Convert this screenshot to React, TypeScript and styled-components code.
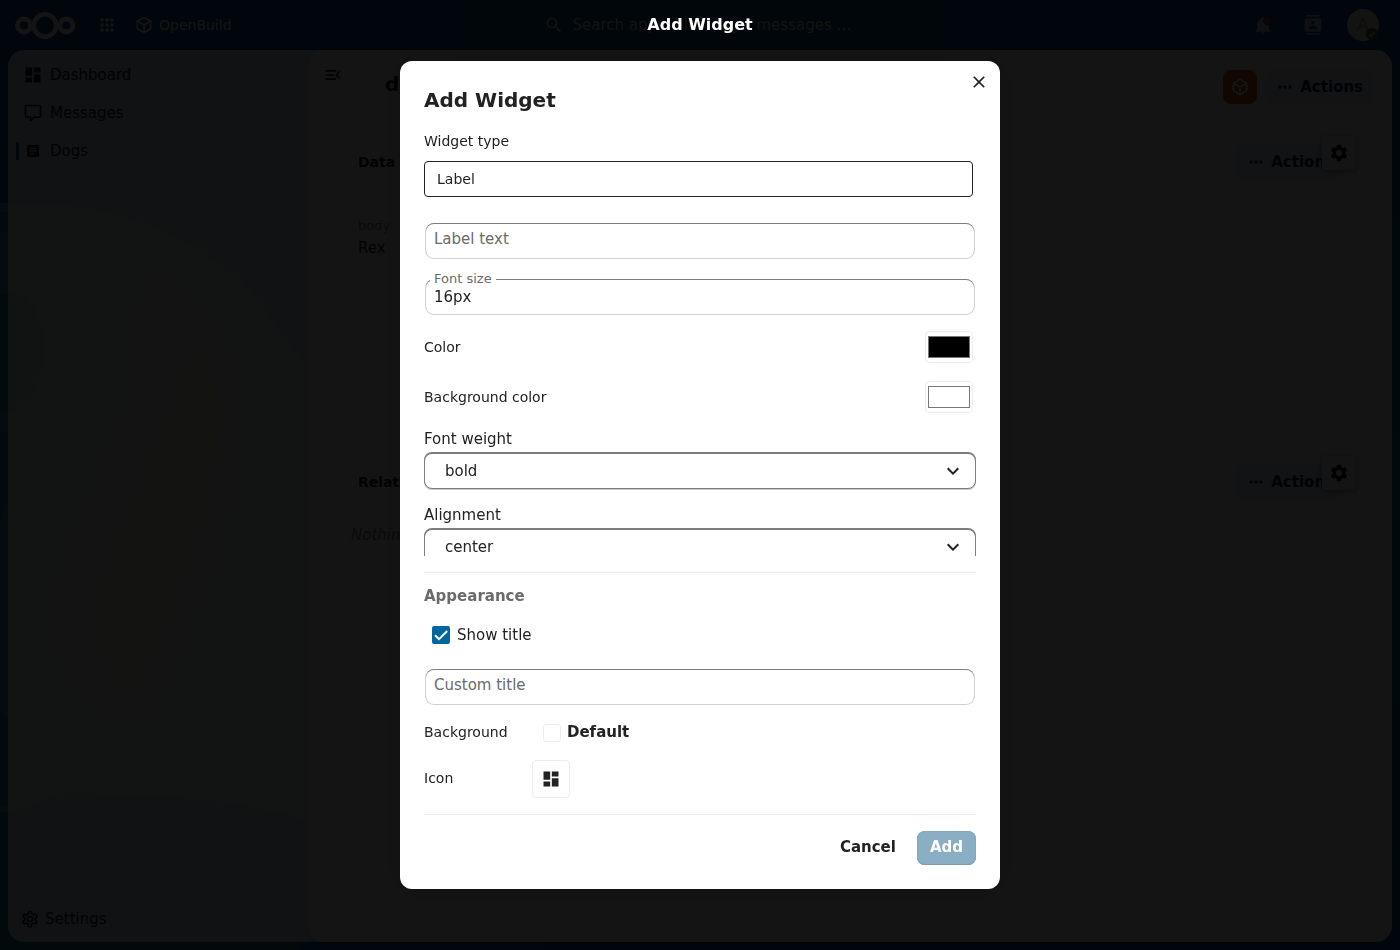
import React, { useState } from "react";
import styled, { createGlobalStyle } from "styled-components";

const GlobalStyle = createGlobalStyle`
  *, *::before, *::after { box-sizing: border-box; }
  html { background: #00589e; }
  body {
    margin: 0;
    font-family: "DejaVu Sans", "Noto Sans", sans-serif;
    font-size: 15px;
    line-height: 20px;
    color: #222;
  }
  button, input, select { font: inherit; color: inherit; margin: 0; }
  h1, h2, h3, p, ul, dl, dd { margin: 0; padding: 0; }
`;

const paths = {
  dashboard: "M13,3V9H21V3M13,21H21V11H13M3,21H11V15H3M3,13H11V3H3V13Z",
  comment:
    "M9,22A1,1 0 0,1 8,21V18H4A2,2 0 0,1 2,16V4C2,2.89 2.9,2 4,2H20A2,2 0 0,1 22,4V16A2,2 0 0,1 20,18H13.9L10.2,21.71C10,21.9 9.75,22 9.5,22V22H9M10,16V19.08L13.08,16H20V4H4V16H10Z",
  textBox:
    "M14,17H7V15H14M17,13H7V11H17M17,9H7V7H17M19,3H5C3.89,3 3,3.89 3,5V19A2,2 0 0,0 5,21H19A2,2 0 0,0 21,19V5C21,3.89 20.1,3 19,3Z",
  menuOpen:
    "M21,15.61L19.59,17L14.58,12L19.59,7L21,8.39L17.44,12L21,15.61M3,6H16V8H3V6M3,13V11H13V13H3M3,18V16H16V18H3Z",
  cube:
    "M21,16.5C21,16.88 20.79,17.21 20.47,17.38L12.57,21.82C12.41,21.94 12.21,22 12,22C11.79,22 11.59,21.94 11.43,21.82L3.53,17.38C3.21,17.21 3,16.88 3,16.5V7.5C3,7.12 3.21,6.79 3.53,6.62L11.43,2.18C11.59,2.06 11.79,2 12,2C12.21,2 12.41,2.06 12.57,2.18L20.47,6.62C20.79,6.79 21,7.12 21,7.5V16.5M12,4.15L6.04,7.5L12,10.85L17.96,7.5L12,4.15M5,15.91L11,19.29V12.58L5,9.21V15.91M19,15.91V9.21L13,12.58V19.29L19,15.91Z",
  search:
    "M9.5,3A6.5,6.5 0 0,1 16,9.5C16,11.11 15.41,12.59 14.44,13.73L14.71,14H15.5L20.5,19L19,20.5L14,15.5V14.71L13.73,14.44C12.59,15.41 11.11,16 9.5,16A6.5,6.5 0 0,1 3,9.5A6.5,6.5 0 0,1 9.5,3M9.5,5C7,5 5,7 5,9.5C5,12 7,14 9.5,14C12,14 14,12 14,9.5C14,7 12,5 9.5,5Z",
  bell:
    "M21,19V20H3V19L5,17V11C5,7.9 7.03,5.17 10,4.29C10,4.19 10,4.1 10,4A2,2 0 0,1 12,2A2,2 0 0,1 14,4C14,4.1 14,4.19 14,4.29C16.97,5.17 19,7.9 19,11V17L21,19M14,21A2,2 0 0,1 12,23A2,2 0 0,1 10,21",
  contacts:
    "M20,0H4V2H20V0M4,24H20V22H4V24M20,4H4A2,2 0 0,0 2,6V18A2,2 0 0,0 4,20H20A2,2 0 0,0 22,18V6A2,2 0 0,0 20,4M12,6.75A2.25,2.25 0 0,1 14.25,9A2.25,2.25 0 0,1 12,11.25A2.25,2.25 0 0,1 9.75,9A2.25,2.25 0 0,1 12,6.75M17,17H7V15.5C7,13.83 10.33,13 12,13C13.67,13 17,13.83 17,15.5V17Z",
  dots:
    "M16,12A2,2 0 0,1 18,10A2,2 0 0,1 20,12A2,2 0 0,1 18,14A2,2 0 0,1 16,12M10,12A2,2 0 0,1 12,10A2,2 0 0,1 14,12A2,2 0 0,1 12,14A2,2 0 0,1 10,12M4,12A2,2 0 0,1 6,10A2,2 0 0,1 8,12A2,2 0 0,1 6,14A2,2 0 0,1 4,12Z",
  cog:
    "M12,15.5A3.5,3.5 0 0,1 8.5,12A3.5,3.5 0 0,1 12,8.5A3.5,3.5 0 0,1 15.5,12A3.5,3.5 0 0,1 12,15.5M19.43,12.97C19.47,12.65 19.5,12.33 19.5,12C19.5,11.67 19.47,11.34 19.43,11L21.54,9.37C21.73,9.22 21.78,8.95 21.66,8.73L19.66,5.27C19.54,5.05 19.27,4.96 19.05,5.05L16.56,6.05C16.04,5.66 15.5,5.32 14.87,5.07L14.5,2.42C14.46,2.18 14.25,2 14,2H10C9.75,2 9.54,2.18 9.5,2.42L9.13,5.07C8.5,5.32 7.96,5.66 7.44,6.05L4.95,5.05C4.73,4.96 4.46,5.05 4.34,5.27L2.34,8.73C2.21,8.95 2.27,9.22 2.46,9.37L4.57,11C4.53,11.34 4.5,11.67 4.5,12C4.5,12.33 4.53,12.65 4.57,12.97L2.46,14.63C2.27,14.78 2.21,15.05 2.34,15.27L4.34,18.73C4.46,18.95 4.73,19.03 4.95,18.95L7.44,17.94C7.96,18.34 8.5,18.68 9.13,18.93L9.5,21.58C9.54,21.82 9.75,22 10,22H14C14.25,22 14.46,21.82 14.5,21.58L14.87,18.93C15.5,18.67 16.04,18.34 16.56,17.94L19.05,18.95C19.27,19.03 19.54,18.95 19.66,18.73L21.66,15.27C21.78,15.05 21.73,14.78 21.54,14.63L19.43,12.97Z",
  cogOutline:
    "M12,8A4,4 0 0,1 16,12A4,4 0 0,1 12,16A4,4 0 0,1 8,12A4,4 0 0,1 12,8M12,10A2,2 0 0,0 10,12A2,2 0 0,0 12,14A2,2 0 0,0 14,12A2,2 0 0,0 12,10M10,22C9.75,22 9.54,21.82 9.5,21.58L9.13,18.93C8.5,18.68 7.96,18.34 7.44,17.94L4.95,18.95C4.73,19.03 4.46,18.95 4.34,18.73L2.34,15.27C2.21,15.05 2.27,14.78 2.46,14.63L4.57,12.97L4.5,12L4.57,11L2.46,9.37C2.27,9.22 2.21,8.95 2.34,8.73L4.34,5.27C4.46,5.05 4.73,4.96 4.95,5.05L7.44,6.05C7.96,5.66 8.5,5.32 9.13,5.07L9.5,2.42C9.54,2.18 9.75,2 10,2H14C14.25,2 14.46,2.18 14.5,2.42L14.87,5.07C15.5,5.32 16.04,5.66 16.56,6.05L19.05,5.05C19.27,4.96 19.54,5.05 19.66,5.27L21.66,8.73C21.79,8.95 21.73,9.22 21.54,9.37L19.43,11L19.5,12L19.43,13L21.54,14.63C21.73,14.78 21.79,15.05 21.66,15.27L19.66,18.73C19.54,18.95 19.27,19.04 19.05,18.95L16.56,17.95C16.04,18.34 15.5,18.68 14.87,18.93L14.5,21.58C14.46,21.82 14.25,22 14,22H10M11.25,4L10.88,6.61C9.68,6.86 8.62,7.5 7.85,8.39L5.44,7.35L4.69,8.65L6.8,10.2C6.4,11.37 6.4,12.64 6.8,13.8L4.68,15.36L5.43,16.66L7.86,15.62C8.63,16.5 9.68,17.14 10.87,17.38L11.24,20H12.76L13.13,17.39C14.32,17.14 15.37,16.5 16.14,15.62L18.57,16.66L19.32,15.36L17.2,13.81C17.6,12.64 17.6,11.37 17.2,10.2L19.31,8.65L18.56,7.35L16.15,8.39C15.38,7.5 14.32,6.86 13.12,6.62L12.75,4H11.25Z",
  close:
    "M19,6.41L17.59,5L12,10.59L6.41,5L5,6.41L10.59,12L5,17.59L6.41,19L12,13.41L17.59,19L19,17.59L13.41,12L19,6.41Z",
  chevron: "M7.41,8.58L12,13.17L16.59,8.58L18,10L12,16L6,10L7.41,8.58Z",
};

const Svg = styled.svg`
  display: block;
  flex: none;
  fill: currentColor;
`;

function Icon({ name, size = 20 }: { name: keyof typeof paths; size?: number }) {
  return (
    <Svg width={size} height={size} viewBox="0 0 24 24" aria-hidden="true">
      <path d={paths[name]} />
    </Svg>
  );
}

/* ---------- Page behind the dialog ---------- */

const Page = styled.div`
  position: relative;
  display: flex;
  flex-direction: column;
  min-height: 100vh;
  isolation: isolate;
`;

const WallpaperSvg = styled.svg`
  position: absolute;
  inset: 0;
  width: 100%;
  height: 100%;
  z-index: -1;
`;

const TopBar = styled.header`
  display: flex;
  align-items: center;
  height: 50px;
  padding: 0 16px 0 12px;
  color: #fff;
`;

const TopSide = styled.div<{ $end?: boolean }>`
  display: flex;
  flex: 1 1 0;
  align-items: center;
  justify-content: ${(p) => (p.$end ? "flex-end" : "flex-start")};
`;

const AppsButton = styled.button`
  display: flex;
  margin-left: 19px;
  padding: 0;
  border: 0;
  background: none;
`;

const AppLink = styled.a`
  display: flex;
  align-items: center;
  gap: 5px;
  margin-left: 17px;
  font-size: 14px;
  color: inherit;
  text-decoration: none;
`;

const SearchButton = styled.button`
  display: flex;
  align-items: center;
  justify-content: center;
  gap: 8px;
  flex: 0 1 488px;
  height: 34px;
  border: 0;
  border-radius: 8px;
  background: #004a72;
  white-space: nowrap;
  color: #dde6ea;
`;

const TopIconButton = styled.button`
  position: relative;
  display: grid;
  place-items: center;
  width: 50px;
  height: 50px;
  padding: 0;
  border: 0;
  background: none;
  opacity: 0.7;
`;

const UnreadDot = styled.span`
  position: absolute;
  top: 17px;
  right: 17px;
  width: 7px;
  height: 7px;
  border-radius: 50%;
  background: #e9560d;
  box-shadow: 0 0 0 1px #00447a;
`;

const Avatar = styled.button`
  position: relative;
  width: 32px;
  height: 32px;
  margin: 0 5px 0 9px;
  padding: 0;
  border: 0;
  border-radius: 50%;
  background: #f3efd7;
  color: #b89a88;
  font-size: 18px;
`;

const Status = styled.span`
  position: absolute;
  right: 1px;
  bottom: 1px;
  display: grid;
  place-items: center;
  width: 12px;
  height: 12px;
  border-radius: 50%;
  background: #2d7b41;
  color: #fff;
`;

const Shell = styled.div`
  display: flex;
  flex: 1;
  margin: 0 8px 8px;
  border-radius: 16px;
  overflow: hidden;
  background: rgba(255, 255, 255, 0.8);
`;

const Sidebar = styled.nav`
  display: flex;
  flex: 0 0 300px;
  flex-direction: column;
  justify-content: space-between;
  padding: 8px 8px 6px;
`;

const NavList = styled.ul`
  display: grid;
  gap: 4px;
  list-style: none;
`;

const NavLink = styled.a<{ $active?: boolean }>`
  position: relative;
  display: flex;
  align-items: center;
  height: 34px;
  border-radius: 8px;
  background: ${(p) => (p.$active ? "rgba(255, 255, 255, 0.25)" : "none")};
  color: inherit;
  text-decoration: none;

  &::before {
    content: "";
    position: absolute;
    left: 0;
    width: 3px;
    height: 18px;
    border-radius: 2px;
    background: ${(p) => (p.$active ? "#00679e" : "transparent")};
  }
`;

const NavIcon = styled.span`
  display: grid;
  place-items: center;
  width: 34px;
`;

const SettingsButton = styled.button`
  display: flex;
  align-items: center;
  gap: 5px;
  height: 34px;
  padding: 0 4px;
  border: 0;
  background: none;
`;

const Main = styled.main`
  flex: 1;
  min-width: 0;
  border-radius: 16px;
  background: #fff;
`;

const MainHead = styled.div`
  display: flex;
  align-items: flex-start;
  gap: 8px;
  height: 84px;
  padding: 20px 19px 0 16px;
`;

const Toggle = styled.button`
  display: flex;
  margin: -5px 34px 0 -1px;
  padding: 0;
  border: 0;
  background: none;
`;

const MainTitle = styled.h1`
  flex: 1;
  font-size: 20px;
  line-height: 28px;
`;

const OrangeButton = styled.button`
  display: grid;
  place-items: center;
  width: 34px;
  height: 34px;
  padding: 0;
  border: 0;
  border-radius: 8px;
  background: #d8590a;
  color: #fff;
`;

const ActionsButton = styled.button`
  display: flex;
  align-items: center;
  gap: 5px;
  height: 34px;
  padding: 0 10px;
  border: 0;
  border-radius: 8px;
  background: #e0e9f5;
  color: #00293f;
  font-weight: bold;
`;

const Card = styled.section`
  margin: 0 35px 26px;
  border: 1px solid #f1f1f1;
  height: 294px;
`;

const CardHead = styled.div`
  position: relative;
  display: flex;
  align-items: center;
  justify-content: space-between;
  height: 57px;
  padding: 0 12px 2px 14px;
  border-bottom: 1px solid #f1f1f1;
`;

const CardTitle = styled.h2`
  font-size: 14px;
`;

const GearButton = styled.button`
  position: absolute;
  top: 1px;
  right: 0;
  display: grid;
  place-items: center;
  width: 34px;
  height: 34px;
  padding: 0;
  border: 0;
  border-radius: 4px;
  background: #fff;
  box-shadow: 0 1px 5px rgba(0, 0, 0, 0.4);
`;

const Fields = styled.dl`
  margin: 24px 14px 0;
  padding-bottom: 55px;
  border-bottom: 1px solid #e6e6e6;

  dt {
    font-size: 13px;
    color: #888;
  }
  dd {
    margin-top: 2px;
  }
`;

const Empty = styled.p`
  padding: 13px 7px;
  font-style: italic;
  color: #777;
`;

/* ---------- Dialog ---------- */

const Mask = styled.div`
  position: fixed;
  inset: 0;
  display: grid;
  place-items: center;
  background: rgba(0, 0, 0, 0.92);
`;

const MaskTitle = styled.div`
  position: absolute;
  top: 0;
  width: 100%;
  line-height: 50px;
  text-align: center;
  font-size: 16px;
  font-weight: bold;
  color: #fff;
`;

const Dialog = styled.div`
  position: relative;
  display: flex;
  flex-direction: column;
  width: min(600px, calc(100vw - 32px));
  max-height: calc(100vh - 122px);
  padding: 24px;
  border-radius: 12px;
  background: #fff;
  box-shadow: 0 0 40px rgba(0, 0, 0, 0.2);
`;

const DialogTitle = styled.h2`
  flex: none;
  margin-bottom: 16px;
  font-size: 20px;
  line-height: 30px;
`;

const CloseButton = styled.button`
  position: absolute;
  top: 4px;
  right: 4px;
  display: grid;
  place-items: center;
  width: 34px;
  height: 34px;
  padding: 0;
  border: 0;
  background: none;
`;

const FormScroll = styled.div`
  flex: 0 1 auto;
  min-height: 0;
  overflow-y: auto;
  scrollbar-width: none;
`;

const SmallLabel = styled.label`
  display: block;
  font-size: 14px;
`;

const TypeSelect = styled.select`
  display: block;
  appearance: none;
  width: calc(100% - 3px);
  height: 36px;
  margin: 10px 0 26px;
  padding: 0 12px;
  border: 1px solid #222;
  border-radius: 4px;
  background: #fff;
  font-size: 14px;
`;

const FieldWrap = styled.div`
  position: relative;
  padding: 2px;
`;

const TextInput = styled.input`
  display: block;
  width: 100%;
  height: 34px;
  margin: -1px 0;
  padding: 0 8px;
  border: 0;
  border-radius: 8px;
  outline: none;
  background: #fff;
  box-shadow: 0 -1px #7d7d7d, 0 0 0 1px #d0d0d0;
`;

const FieldLabel = styled.label<{ $raised?: boolean }>`
  position: absolute;
  left: 6px;
  top: ${(p) => (p.$raised ? "-8px" : "6px")};
  padding: 0 4px;
  background: #fff;
  font-size: ${(p) => (p.$raised ? "13px" : "15px")};
  line-height: ${(p) => (p.$raised ? "16px" : "20px")};
  color: #6b6b6b;
`;

const InputStack = styled.div`
  display: grid;
  gap: 20px;
  margin-bottom: 16px;
`;

const ColorRow = styled.div`
  display: flex;
  align-items: center;
  justify-content: space-between;
  height: 32px;
  margin-bottom: 18px;
  padding-right: 3px;
`;

const ColorInput = styled.input`
  width: 48px;
  height: 32px;
  padding: 0;
  border: 1px solid #ededed;
  border-radius: 4px;
  background: #fff;
`;

const SelectGroup = styled.div`
  display: grid;
  gap: 4px;
  margin: -2px 0 18px;
`;

const SelectWrap = styled.div`
  position: relative;

  svg {
    position: absolute;
    top: 6px;
    right: 11px;
    pointer-events: none;
  }
`;

const Select = styled.select`
  display: block;
  appearance: none;
  width: 100%;
  height: 36px;
  padding: 0 20px;
  border: 1px solid #7d7d7d;
  border-radius: 8px;
  background: #fff;
  box-shadow: 0 -1px #7d7d7d, 0 1px #c8c8c8;
`;

const Appearance = styled.section`
  flex: none;
  margin-top: 16px;
  padding: 12px 0 16px;
  border-top: 1px solid #ededed;
  border-bottom: 1px solid #ededed;
`;

const SectionTitle = styled.h3`
  margin-bottom: 10px;
  font-size: 15px;
  line-height: 22px;
  color: #6b6b6b;
`;

const CheckRow = styled.label`
  display: flex;
  align-items: center;
  gap: 7px;
  height: 36px;
  margin-bottom: 16px;
  padding-left: 8px;
`;

const CheckBox = styled.span`
  display: grid;
  width: 18px;
  height: 18px;

  input,
  svg {
    grid-area: 1 / 1;
  }
  input {
    appearance: none;
    width: 18px;
    height: 18px;
    border: 2px solid #00679e;
    border-radius: 2px;
  }
  input:checked {
    background: #00679e;
  }
  svg {
    pointer-events: none;
    fill: none;
    stroke: #fff;
    stroke-width: 2;
  }
`;

const OptionRow = styled.div<{ $height: number }>`
  display: flex;
  align-items: center;
  height: ${(p) => p.$height}px;
  margin-top: 16px;
`;

const OptionLabel = styled(SmallLabel)`
  width: 108px;
  padding-bottom: 2px;
`;

const DefaultButton = styled.button`
  display: flex;
  align-items: center;
  gap: 6px;
  padding: 0 11px;
  border: 0;
  background: none;
  font-weight: bold;
  line-height: 18px;
`;

const DefaultText = styled.span`
  padding-bottom: 2px;
`;

const Swatch = styled.span`
  width: 18px;
  height: 18px;
  border: 1px solid #ededed;
  border-radius: 3px;
`;

const IconPicker = styled.button`
  display: grid;
  place-items: center;
  width: 38px;
  height: 38px;
  padding: 0;
  border: 1px solid #ededed;
  border-radius: 4px;
  background: #fff;
`;

const Footer = styled.div`
  display: flex;
  flex: none;
  justify-content: flex-end;
  gap: 8px;
  padding-top: 16px;
`;

const FooterButton = styled.button<{ $primary?: boolean }>`
  height: 34px;
  padding: 0 13px 2px;
  border: 0;
  border-radius: 8px;
  font-weight: bold;
  background: ${(p) => (p.$primary ? "#8aaec4" : "none")};
  color: ${(p) => (p.$primary ? "#fff" : "#222")};
  box-shadow: ${(p) => (p.$primary ? "inset 0 -1px #7c9db1, inset 0 0 0 1px #84a7bc" : "none")};
`;

function Wallpaper() {
  return (
    <WallpaperSvg viewBox="0 0 1400 950" preserveAspectRatio="xMidYMid slice" aria-hidden="true">
      <defs>
        <linearGradient id="sky" x1="0" y1="0" x2="0" y2="1">
          <stop offset="0" stopColor="#00508c" />
          <stop offset="0.5" stopColor="#0070b4" />
          <stop offset="1" stopColor="#005088" />
        </linearGradient>
      </defs>
      <rect width="1400" height="950" fill="url(#sky)" />
      <path d="M0 203C120 198 200 240 250 290C290 340 300 365 330 380V830C230 790 150 800 70 792C40 800 20 815 0 812Z" fill="#5090bc" />
      <path d="M0 293C40 290 42 330 42 350C42 385 30 410 0 412Z" fill="#209098" />
      <path d="M140 270C200 275 250 340 246 420C244 520 200 620 160 710C140 745 70 700 42 640C40 560 110 460 128 380C134 330 130 280 140 270Z" fill="#68b088" />
      <path d="M195 345C225 370 220 440 206 500C190 570 160 650 130 690C100 690 90 620 110 560C130 500 180 380 195 345Z" fill="#b0a080" />
      <path d="M0 812C30 812 50 800 62 793C150 795 250 820 308 866V950H0Z" fill="#289098" opacity="0.6" />
      <path d="M0 212H8V232H0ZM0 432H8V500L0 520ZM0 711L8 718V805H0Z" fill="#307098" />
      <path d="M300 942H540L545 950H300Z" fill="#0068b4" />
    </WallpaperSvg>
  );
}

function Logo() {
  return (
    <Svg width="66" height="30" viewBox="0 0 66 30" role="img" aria-label="Home">
      <g fill="none" stroke="#fff">
        <circle cx="33" cy="15.5" r="11.2" strokeWidth="4.6" />
        <circle cx="12" cy="15.5" r="6.5" strokeWidth="4.8" />
        <circle cx="54.3" cy="15.5" r="6.5" strokeWidth="4.8" />
      </g>
    </Svg>
  );
}

function AppsGrid() {
  return (
    <Svg width="20" height="20" viewBox="0 0 20 20" aria-hidden="true">
      {[5, 10, 15].map((y) => [5, 10, 15].map((x) => <circle key={`${x}-${y}`} cx={x} cy={y} r="1.8" />))}
    </Svg>
  );
}

function Actions() {
  return (
    <ActionsButton type="button">
      <Icon name="dots" />
      Actions
    </ActionsButton>
  );
}

function TextField({ id, label, initial = "" }: { id: string; label: string; initial?: string }) {
  const [value, setValue] = useState(initial);
  return (
    <FieldWrap>
      <TextInput id={id} value={value} onChange={(e) => setValue(e.target.value)} />
      <FieldLabel htmlFor={id} $raised={value !== ""}>
        {label}
      </FieldLabel>
    </FieldWrap>
  );
}

function SelectField({ id, label, options, initial }: { id: string; label: string; options: string[]; initial: string }) {
  return (
    <SelectGroup>
      <label htmlFor={id}>{label}</label>
      <SelectWrap>
        <Select id={id} defaultValue={initial}>
          {options.map((o) => (
            <option key={o}>{o}</option>
          ))}
        </Select>
        <Icon name="chevron" size={24} />
      </SelectWrap>
    </SelectGroup>
  );
}

function AddWidgetDialog() {
  return (
    <Mask>
      <MaskTitle>Add Widget</MaskTitle>
      <Dialog role="dialog" aria-modal="true" aria-labelledby="dialog-title">
        <DialogTitle id="dialog-title">Add Widget</DialogTitle>
        <CloseButton type="button" aria-label="Close">
          <Icon name="close" />
        </CloseButton>
        <FormScroll>
          <SmallLabel htmlFor="widget-type">Widget type</SmallLabel>
          <TypeSelect id="widget-type">
            <option>Label</option>
          </TypeSelect>
          <InputStack>
            <TextField id="label-text" label="Label text" />
            <TextField id="font-size" label="Font size" initial="16px" />
          </InputStack>
          <ColorRow>
            <SmallLabel htmlFor="color">Color</SmallLabel>
            <ColorInput id="color" type="color" defaultValue="#000000" />
          </ColorRow>
          <ColorRow>
            <SmallLabel htmlFor="bg-color">Background color</SmallLabel>
            <ColorInput id="bg-color" type="color" defaultValue="#ffffff" />
          </ColorRow>
          <SelectField id="font-weight" label="Font weight" options={["normal", "bold"]} initial="bold" />
          <SelectField id="alignment" label="Alignment" options={["left", "center", "right"]} initial="center" />
        </FormScroll>
        <Appearance>
          <SectionTitle>Appearance</SectionTitle>
          <CheckRow>
            <CheckBox>
              <input type="checkbox" defaultChecked />
              <Svg width="18" height="18" viewBox="0 0 18 18" aria-hidden="true">
                <path d="M3 9.2L7 13.2L15.2 5" />
              </Svg>
            </CheckBox>
            Show title
          </CheckRow>
          <TextField id="custom-title" label="Custom title" />
          <OptionRow $height={23}>
            <OptionLabel htmlFor="background">Background</OptionLabel>
            <DefaultButton id="background" type="button">
              <Swatch />
              <DefaultText>Default</DefaultText>
            </DefaultButton>
          </OptionRow>
          <OptionRow $height={38}>
            <OptionLabel htmlFor="icon">Icon</OptionLabel>
            <IconPicker id="icon" type="button">
              <Icon name="dashboard" />
            </IconPicker>
          </OptionRow>
        </Appearance>
        <Footer>
          <FooterButton type="button">Cancel</FooterButton>
          <FooterButton type="button" $primary disabled>
            Add
          </FooterButton>
        </Footer>
      </Dialog>
    </Mask>
  );
}

export default function App() {
  return (
    <>
      <GlobalStyle />
      <Page>
        <Wallpaper />
        <TopBar>
          <TopSide>
            <Logo />
            <AppsButton type="button" aria-label="Apps">
              <AppsGrid />
            </AppsButton>
            <AppLink href="#">
              <Icon name="cube" />
              OpenBuild
            </AppLink>
          </TopSide>
          <SearchButton type="button">
            <Icon name="search" />
            Search apps, files, tags, messages …
          </SearchButton>
          <TopSide $end>
            <TopIconButton type="button" aria-label="Notifications">
              <Icon name="bell" />
              <UnreadDot />
            </TopIconButton>
            <TopIconButton type="button" aria-label="Contacts">
              <Icon name="contacts" />
            </TopIconButton>
            <Avatar type="button">
              A
              <Status>
                <Svg width="8" height="8" viewBox="0 0 8 8" aria-hidden="true">
                  <path d="M1 4L3.2 6.2L7 2.2" fill="none" stroke="#fff" strokeWidth="1.4" />
                </Svg>
              </Status>
            </Avatar>
          </TopSide>
        </TopBar>
        <Shell>
          <Sidebar>
            <NavList>
              <li>
                <NavLink href="#">
                  <NavIcon>
                    <Icon name="dashboard" />
                  </NavIcon>
                  Dashboard
                </NavLink>
              </li>
              <li>
                <NavLink href="#">
                  <NavIcon>
                    <Icon name="comment" />
                  </NavIcon>
                  Messages
                </NavLink>
              </li>
              <li>
                <NavLink href="#" $active>
                  <NavIcon>
                    <Icon name="textBox" size={16} />
                  </NavIcon>
                  Dogs
                </NavLink>
              </li>
            </NavList>
            <SettingsButton type="button">
              <Icon name="cogOutline" />
              Settings
            </SettingsButton>
          </Sidebar>
          <Main>
            <MainHead>
              <Toggle type="button" aria-label="Close navigation">
                <Icon name="menuOpen" />
              </Toggle>
              <MainTitle>dogs</MainTitle>
              <OrangeButton type="button" aria-label="Edit in OpenBuild">
                <Icon name="cube" />
              </OrangeButton>
              <Actions />
            </MainHead>
            <Card>
              <CardHead>
                <CardTitle>Data</CardTitle>
                <Actions />
                <GearButton type="button" aria-label="Widget settings">
                  <Icon name="cog" />
                </GearButton>
              </CardHead>
              <Fields>
                <dt>body</dt>
                <dd>Rex</dd>
              </Fields>
            </Card>
            <Card>
              <CardHead>
                <CardTitle>Related</CardTitle>
                <Actions />
                <GearButton type="button" aria-label="Widget settings">
                  <Icon name="cog" />
                </GearButton>
              </CardHead>
              <Empty>Nothing here</Empty>
            </Card>
          </Main>
        </Shell>
      </Page>
      <AddWidgetDialog />
    </>
  );
}
